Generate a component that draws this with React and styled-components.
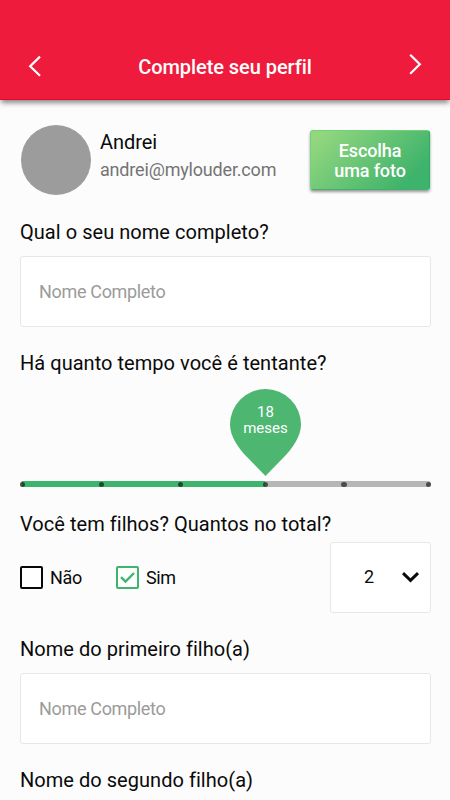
import React from "react";
import styled, { createGlobalStyle } from "styled-components";

const GlobalStyle = createGlobalStyle`
  * { box-sizing: border-box; }
  html, body { margin: 0; padding: 0; background: #fcfcfc; }
  body { font-family: Roboto, sans-serif; color: #0a0a0a; overflow: hidden; }
  button, input { font-family: inherit; }
`;

const Screen = styled.div`
  width: 450px;
  height: 800px;
  overflow: hidden;
  background: #fcfcfc;
`;

const Header = styled.header`
  height: 100px;
  padding: 34px 27px 0 27px;
  display: flex;
  align-items: center;
  justify-content: space-between;
  background: #ef1b3c;
  border-bottom: 1px solid #df0a25;
  box-shadow: 0 4px 5px -1px rgba(0, 0, 0, 0.45);
`;

const Title = styled.h1`
  margin: 0;
  color: #fff;
  font-size: 20px;
  line-height: 24px;
  font-weight: 500;
  letter-spacing: -0.06px;
`;

const NavButton = styled.button`
  display: flex;
  padding: 0;
  border: 0;
  background: none;
  color: #fff;
  margin-bottom: ${(p) => p.$lift || 0}px;
`;

const Content = styled.main`
  padding: 25px 19px 0 20px;
`;

const Profile = styled.section`
  display: flex;
  height: 70px;
  padding-left: 1px;
`;

const Avatar = styled.div`
  width: 70px;
  height: 70px;
  border-radius: 50%;
  background: #9c9c9c;
`;

const Identity = styled.div`
  flex: 1;
  padding: 5px 0 0 9px;
`;

const Name = styled.div`
  font-size: 20px;
  line-height: 24px;
  letter-spacing: -0.05px;
`;

const Email = styled.div`
  margin-top: 4px;
  font-size: 18px;
  line-height: 24px;
  letter-spacing: -0.18px;
  color: #747474;
`;

const PhotoButton = styled.button`
  width: 120px;
  height: 60px;
  margin: 5px 1px 0 0;
  padding: 1px 0 0;
  border: 1px solid;
  border-color: #6fd277 #27b061 #3cb264 #74d27c;
  border-radius: 3px;
  background: linear-gradient(135deg, #92d67e 8%, #3db36b 85%);
  box-shadow: 0 2px 3px rgba(0, 0, 0, 0.4);
  color: #fff;
  font-size: 18px;
  line-height: 20px;
  font-weight: 500;
  letter-spacing: -0.12px;
`;

const Label = styled.label`
  display: block;
  margin-top: ${(p) => p.$top ?? 24}px;
  font-size: 20px;
  line-height: 24px;
  letter-spacing: 0.04px;
  white-space: nowrap;
`;

const TextField = styled.input`
  display: block;
  width: 411px;
  height: 71px;
  margin-top: 12px;
  padding: 0 18px;
  border: 1px solid #e7e7e7;
  border-radius: 3px;
  background: #fff;
  font-size: 18px;
  letter-spacing: -0.33px;
  outline: none;
  &::placeholder { color: #9b9b9b; opacity: 1; }
`;

const Slider = styled.div`
  margin-top: 14px;
  height: 99px;
`;

const Marker = styled.div`
  position: relative;
  width: 71px;
  height: 87px;
  margin-left: 210px;
`;

const MarkerShape = styled.svg`
  display: block;
`;

const MarkerText = styled.div`
  position: absolute;
  inset: 15px 0 auto;
  text-align: center;
  color: #fff;
  font-size: 15px;
  line-height: 16px;
  letter-spacing: 0;
`;

const Track = styled.div`
  position: relative;
  width: 411px;
  height: 6px;
  margin-top: 5px;
  border-radius: 3px;
  background: #b6b6b6;
`;

const Progress = styled.div`
  width: ${(p) => p.$value}px;
  height: 6px;
  margin-left: 2px;
  background: #3fb46c;
`;

const Stop = styled.span`
  position: absolute;
  top: 0.5px;
  left: ${(p) => p.$at}px;
  width: 5.4px;
  height: 5.4px;
  border-radius: 50%;
  background: rgba(0, 0, 0, 0.58);
`;

const ChildrenRow = styled.div`
  display: flex;
  align-items: center;
  height: 71px;
  margin-top: 6px;
`;

const Choice = styled.div`
  display: flex;
  align-items: center;
  gap: 7px;
  width: 96px;
  font-size: 18px;
  line-height: 24px;
  letter-spacing: -0.35px;
`;

const Box = styled.span`
  display: flex;
  align-items: center;
  justify-content: center;
  width: 23px;
  height: 23px;
  border: 2px solid ${(p) => (p.$checked ? "#3fb46c" : "#080808")};
  border-radius: 2px;
  background: #fff;
  color: #3fb46c;
`;

const Select = styled.button`
  display: flex;
  align-items: center;
  justify-content: space-between;
  width: 101px;
  height: 71px;
  margin-left: auto;
  padding: 0 11px 2px 33px;
  border: 1px solid #e7e7e7;
  border-radius: 3px;
  background: #fff;
  color: #0a0a0a;
  font-size: 18px;
`;

const Chevron = ({ d, width, height, stroke }) => (
  <svg width={width} height={height} fill="none" stroke="currentColor" strokeWidth={stroke}>
    <path d={d} />
  </svg>
);

const stops = [0, 79, 158, 242.5, 321.3, 405.6];

export default function App() {
  return (
    <>
      <GlobalStyle />
      <Screen>
        <Header>
          <NavButton aria-label="Voltar" $lift={1}>
            <Chevron width={15} height={22} stroke={2.2} d="M13 1.6 3.2 11.2l9.8 9.5" />
          </NavButton>
          <Title>Complete seu perfil</Title>
          <NavButton aria-label="Avançar" $lift={5}>
            <Chevron width={15} height={22} stroke={2.2} d="M2.2 1.8 11.8 11.3l-9.6 9.5" />
          </NavButton>
        </Header>
        <Content>
          <Profile>
            <Avatar />
            <Identity>
              <Name>Andrei</Name>
              <Email>andrei@mylouder.com</Email>
            </Identity>
            <PhotoButton>Escolha<br />uma foto</PhotoButton>
          </Profile>

          <Label $top={25}>Qual o seu nome completo?</Label>
          <TextField placeholder="Nome Completo" />

          <Label>Há quanto tempo você é tentante?</Label>
          <Slider>
            <Marker>
              <MarkerShape width="71" height="87">
                <path fill="#4db771" d="M35.5 87 18 69C8 59 0 47 0 35.5a35.5 35.5 0 0 1 71 0C71 47 63 59 53 69Z" />
              </MarkerShape>
              <MarkerText>18<br />meses</MarkerText>
            </Marker>
            <Track>
              <Progress $value={243} />
              {stops.map((at) => <Stop key={at} $at={at} />)}
            </Track>
          </Slider>

          <Label>Você tem filhos? Quantos no total?</Label>
          <ChildrenRow>
            <Choice><Box />Não</Choice>
            <Choice>
              <Box $checked>
                <Chevron width={15} height={13} stroke={2.4} d="M1 6.2 5.5 10.6 14 2" />
              </Box>
              Sim
            </Choice>
            <Select aria-label="Quantidade de filhos">
              2
              <Chevron width={17} height={12} stroke={3} d="M1 2.2 8.5 9.4 16 2.2" />
            </Select>
          </ChildrenRow>

          <Label>Nome do primeiro filho(a)</Label>
          <TextField placeholder="Nome Completo" />

          <Label>Nome do segundo filho(a)</Label>
        </Content>
      </Screen>
    </>
  );
}
